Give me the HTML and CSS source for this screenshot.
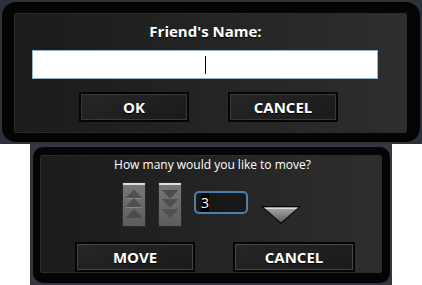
FILE: index.html
```html
<!DOCTYPE html>
<html>
<head>
<meta charset="utf-8">
<link rel="stylesheet" href="styles.css">
</head>
<body>
<div class="top">
  <div class="frame top-frame">
    <div class="panel top-panel">
      <div class="title">Friend's Name:</div>
      <div class="name-input"><span class="caret"></span></div>
      <div class="btn-row top-btns">
        <div class="btn btn-top">OK</div>
        <div class="btn btn-top">CANCEL</div>
      </div>
    </div>
  </div>
</div>
<div class="bottom">
  <div class="frame bottom-frame">
    <div class="panel bottom-panel">
      <div class="question">How many would you like to move?</div>
      <div class="stepper-row">
        <div class="step-btn">
          <svg width="24" height="45" viewBox="0 0 24 45">
            <defs>
              <linearGradient id="sg" x1="0" y1="0" x2="0" y2="1">
                <stop offset="0" stop-color="#787878"/>
                <stop offset="1" stop-color="#5c5c5c"/>
              </linearGradient>
            </defs>
            <rect x="0.5" y="0.5" width="23" height="44" fill="url(#sg)" stroke="#2a2a2a"/>
            <rect x="1" y="1" width="22" height="2" fill="#dedede"/>
            <polygon points="3.5,16 12,7.5 20.5,16" fill="#505050"/>
            <polygon points="4,16 20,16 20,17 4,17" fill="#8a8a8a"/>
            <polygon points="3.5,25 12,16 20.5,25" fill="#4e4e4e"/>
            <polygon points="4,25 20,25 20,26 4,26" fill="#888"/>
            <polygon points="3.5,36 12,27 20.5,36" fill="#4c4c4c"/>
          </svg>
        </div>
        <div class="step-btn">
          <svg width="24" height="45" viewBox="0 0 24 45">
            <rect x="0.5" y="0.5" width="23" height="44" fill="url(#sg)" stroke="#2a2a2a"/>
            <rect x="1" y="1" width="22" height="2" fill="#dedede"/>
            <polygon points="3.5,8 20.5,8 12,16.5" fill="#4c4c4c"/>
            <polygon points="3.5,17 20.5,17 12,26" fill="#4e4e4e"/>
            <polygon points="3.5,27 20.5,27 12,36" fill="#505050"/>
          </svg>
        </div>
        <div class="num-input"><span class="sel">3</span></div>
        <div class="drop">
          <svg width="42" height="20" viewBox="0 0 42 20">
            <defs>
              <linearGradient id="dg" x1="0" y1="0" x2="0" y2="1">
                <stop offset="0" stop-color="#a8a8a8"/>
                <stop offset="1" stop-color="#5e5e5e"/>
              </linearGradient>
            </defs>
            <polygon points="1,1 41,1 21,19" fill="#050505"/>
            <polygon points="4,2.5 38,2.5 21,17.5" fill="url(#dg)"/>
            <polygon points="4,2.5 38,2.5 36.3,4 5.7,4" fill="#dcdcdc"/>
          </svg>
        </div>
      </div>
      <div class="btn-row bottom-btns">
        <div class="btn btn-move">MOVE</div>
        <div class="btn btn-cancel2">CANCEL</div>
      </div>
    </div>
  </div>
</div>
</body>
</html>
```
FILE: styles.css
```css
html, body {
  margin: 0;
  padding: 0;
  background: #ffffff;
}
body {
  width: 422px;
  font-family: "Open Sans", "DejaVu Sans", sans-serif;
  color: #ffffff;
}
.top {
  width: 422px;
  height: 144px;
  box-sizing: border-box;
  padding: 2px;
  background: #2b3239;
}
.frame {
  box-sizing: border-box;
  background: #040404;
}
.top-frame {
  height: 140px;
  padding: 11px 13px 9px 12px;
  border-radius: 14px;
}
.panel {
  box-sizing: border-box;
  border: 1px solid #2c2c2c;
  border-radius: 2px;
  background: linear-gradient(90deg, #1b1b1b 0%, #242424 50%, #2e2e2e 100%);
  display: flex;
  flex-direction: column;
}
.top-panel {
  height: 120px;
  padding-top: 7px;
}
.title {
  font-size: 15px;
  line-height: 20px;
  font-weight: 700;
  text-align: center;
  padding-right: 10px;
  text-shadow: 0 1px 1px #000;
}
.name-input {
  margin-top: 9px;
  margin-left: 17px;
  width: 346px;
  height: 29px;
  box-sizing: border-box;
  background: #ffffff;
  border: 1px solid #8fb4cc;
  display: flex;
  align-items: center;
  padding-left: 172px;
}
.caret {
  width: 1px;
  height: 18px;
  background: #000;
}
.btn-row {
  display: flex;
}
.top-btns {
  margin-top: 13px;
  padding-left: 64px;
  gap: 39px;
}
.btn {
  box-sizing: border-box;
  height: 30px;
  border: 2px solid #050505;
  box-shadow: inset 0 0 0 1px #3a3a3a;
  background: linear-gradient(160deg, #262626 0%, #1a1a1a 100%);
  font-weight: 700;
  font-size: 15px;
  line-height: 26px;
  text-align: center;
  text-shadow: 0 1px 1px #000;
}
.btn-top {
  width: 110px;
}
.bottom {
  margin-left: 30px;
  width: 362px;
  height: 141px;
  box-sizing: border-box;
  padding: 3px 2px 2px 3px;
  background: #3a3340;
}
.bottom-frame {
  height: 136px;
  padding: 8px 8px 10px 7px;
  border-radius: 10px;
}
.bottom-panel {
  height: 118px;
  padding-top: 1px;
}
.question {
  font-size: 12px;
  line-height: 16px;
  text-align: center;
  padding-left: 3px;
}
.stepper-row {
  display: flex;
  align-items: flex-start;
  margin-top: 9px;
  padding-left: 81px;
  gap: 12px;
}
.step-btn {
  width: 24px;
  height: 45px;
  display: flex;
}
.num-input {
  margin-top: 9px;
  width: 54px;
  height: 23px;
  box-sizing: border-box;
  border: 2px solid #4b7fac;
  border-radius: 5px;
  background: #181818;
  padding-left: 5px;
  font-size: 14px;
  line-height: 19px;
}
.sel {
  background: #000;
}
.drop {
  margin-top: 23px;
  width: 42px;
  height: 20px;
  display: flex;
}
.bottom-btns {
  margin-top: 15px;
  padding-left: 34px;
  gap: 38px;
}
.btn-move {
  width: 120px;
  box-shadow: inset 0 0 0 1px #474747;
}
.btn-cancel2 {
  width: 122px;
  box-shadow: inset 0 0 0 1px #474747;
}
```
